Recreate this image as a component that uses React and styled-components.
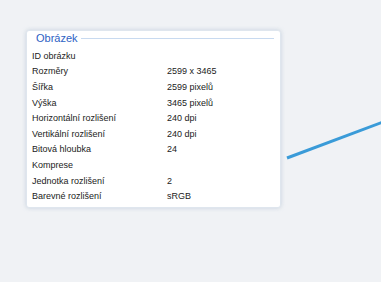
import styled, { createGlobalStyle } from "styled-components";

const GlobalStyle = createGlobalStyle`
  html, body {
    margin: 0;
    padding: 0;
    background: #f0f2f5;
    font-family: "Liberation Sans", Arial, sans-serif;
  }
`;

const Page = styled.div`
  position: relative;
  width: 381px;
  height: 282px;
  padding: 30px 0 0 26px;
  box-sizing: border-box;
  overflow: hidden;
`;

const Panel = styled.div`
  width: 255px;
  height: 178px;
  box-sizing: border-box;
  background: #fff;
  border: 1px solid #dfe6ee;
  border-radius: 3px;
  box-shadow: 0 0 4px rgba(150, 170, 195, 0.45);
  padding: 0 6px 0 5px;
`;

const Legend = styled.div`
  display: flex;
  align-items: center;
  gap: 3px;
  height: 14px;
  margin-left: 4px;
  color: #2e62c4;
  font-size: 11px;

  &::after {
    content: "";
    flex: 1;
    height: 1px;
    background: #c8daf0;
    margin-top: 1px;
  }
`;

const Rows = styled.div`
  display: grid;
  grid-template-columns: 135px 1fr;
  grid-auto-rows: 15.6px;
  margin-top: 3px;
  font-size: 9px;
  color: #222;
  align-items: center;
`;

const Cell = styled.div`
  white-space: nowrap;
`;

const Stroke = styled.svg`
  position: absolute;
  left: 0;
  top: 0;
`;

const rows = [
  ["ID obrázku", ""],
  ["Rozměry", "2599 x 3465"],
  ["Šířka", "2599 pixelů"],
  ["Výška", "3465 pixelů"],
  ["Horizontální rozlišení", "240 dpi"],
  ["Vertikální rozlišení", "240 dpi"],
  ["Bitová hloubka", "24"],
  ["Komprese", ""],
  ["Jednotka rozlišení", "2"],
  ["Barevné rozlišení", "sRGB"],
];

const App = () => {
  return (
    <Page>
      <GlobalStyle />
      <Panel>
        <Legend>Obrázek</Legend>
        <Rows>
          {rows.map(([k, v]) => [
            <Cell key={k}>{k}</Cell>,
            <Cell key={k + "v"}>{v}</Cell>,
          ])}
        </Rows>
      </Panel>
      <Stroke width="381" height="282">
        <line x1="287" y1="158" x2="383" y2="122" stroke="#3a9bd8" strokeWidth="3" />
      </Stroke>
    </Page>
  );
};

export default App;
